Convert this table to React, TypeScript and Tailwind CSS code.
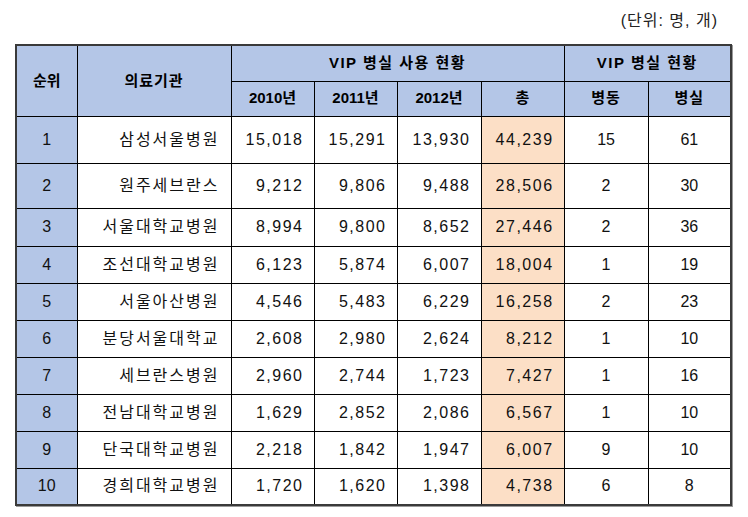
const rows = [
  { rank: 1, name: "삼성서울병원", y2010: "15,018", y2011: "15,291", y2012: "13,930", total: "44,239", wards: "15", rooms: "61", h: "h-[47px]" },
  { rank: 2, name: "원주세브란스", y2010: "9,212", y2011: "9,806", y2012: "9,488", total: "28,506", wards: "2", rooms: "30", h: "h-[45px]" },
  { rank: 3, name: "서울대학교병원", y2010: "8,994", y2011: "9,800", y2012: "8,652", total: "27,446", wards: "2", rooms: "36", h: "h-[38px]" },
  { rank: 4, name: "조선대학교병원", y2010: "6,123", y2011: "5,874", y2012: "6,007", total: "18,004", wards: "1", rooms: "19", h: "h-[37px]" },
  { rank: 5, name: "서울아산병원", y2010: "4,546", y2011: "5,483", y2012: "6,229", total: "16,258", wards: "2", rooms: "23", h: "h-[37px]" },
  { rank: 6, name: "분당서울대학교", y2010: "2,608", y2011: "2,980", y2012: "2,624", total: "8,212", wards: "1", rooms: "10", h: "h-[37px]" },
  { rank: 7, name: "세브란스병원", y2010: "2,960", y2011: "2,744", y2012: "1,723", total: "7,427", wards: "1", rooms: "16", h: "h-[37px]" },
  { rank: 8, name: "전남대학교병원", y2010: "1,629", y2011: "2,852", y2012: "2,086", total: "6,567", wards: "1", rooms: "10", h: "h-[37px]" },
  { rank: 9, name: "단국대학교병원", y2010: "2,218", y2011: "1,842", y2012: "1,947", total: "6,007", wards: "9", rooms: "10", h: "h-[37px]" },
  { rank: 10, name: "경희대학교병원", y2010: "1,720", y2011: "1,620", y2012: "1,398", total: "4,738", wards: "6", rooms: "8", h: "h-[37px]" },
];

const font = { fontFamily: "'Liberation Sans', 'Noto Sans CJK KR', sans-serif" };

function App() {
  const th = "border border-black bg-[#b4c6e7] p-0 text-center text-[15px] font-bold text-black";
  const num = "border border-black px-[10px] text-right text-[16px] font-normal tracking-[1.5px] text-[#111]";
  const mid = "border border-black text-center text-[16px] font-normal text-[#111]";

  return (
    <div className="min-h-[517px] w-[748px] bg-white" style={font}>
      <div className="ml-[15px] w-[715px]">
        <div className="flex h-[44px] items-center justify-end pr-[12px] pb-[2px] text-[16px] tracking-[1px] text-[#222]">
          <span>(단위: 명, 개)</span>
        </div>
        <table className="w-[715px] table-fixed border-collapse border-2 border-[#3a3a3a] shadow-[1px_1px_0_#9a9a9a]">
          <colgroup>
            <col className="w-[61px]" />
            <col className="w-[154px]" />
            <col className="w-[83px]" />
            <col className="w-[83px]" />
            <col className="w-[84px]" />
            <col className="w-[83px]" />
            <col className="w-[84px]" />
            <col className="w-[83px]" />
          </colgroup>
          <thead>
            <tr className="h-[36px]">
              <th rowSpan={2} className={th}>순위</th>
              <th rowSpan={2} className={`${th} tracking-[1px]`}>의료기관</th>
              <th colSpan={4} className={`${th} tracking-[1.5px]`}>VIP 병실 사용 현황</th>
              <th colSpan={2} className={`${th} tracking-[1.5px]`}>VIP 병실 현황</th>
            </tr>
            <tr className="h-[35px]">
              <th className={th}>2010년</th>
              <th className={th}>2011년</th>
              <th className={th}>2012년</th>
              <th className={th}>총</th>
              <th className={`${th} tracking-[1px]`}>병동</th>
              <th className={`${th} tracking-[1px]`}>병실</th>
            </tr>
          </thead>
          <tbody>
            {rows.map((r) => (
              <tr key={r.rank} className={r.h}>
                <td className="border border-black bg-[#b4c6e7] text-center text-[16px] font-normal text-[#111]">{r.rank}</td>
                <td className="border border-black pr-[11px] text-right text-[16px] font-normal tracking-[2px] text-[#111]">{r.name}</td>
                <td className={num}>{r.y2010}</td>
                <td className={num}>{r.y2011}</td>
                <td className={num}>{r.y2012}</td>
                <td className={`${num} bg-[#fcdfc6]`}>{r.total}</td>
                <td className={mid}>{r.wards}</td>
                <td className={mid}>{r.rooms}</td>
              </tr>
            ))}
          </tbody>
        </table>
      </div>
    </div>
  );
}

export default App;
